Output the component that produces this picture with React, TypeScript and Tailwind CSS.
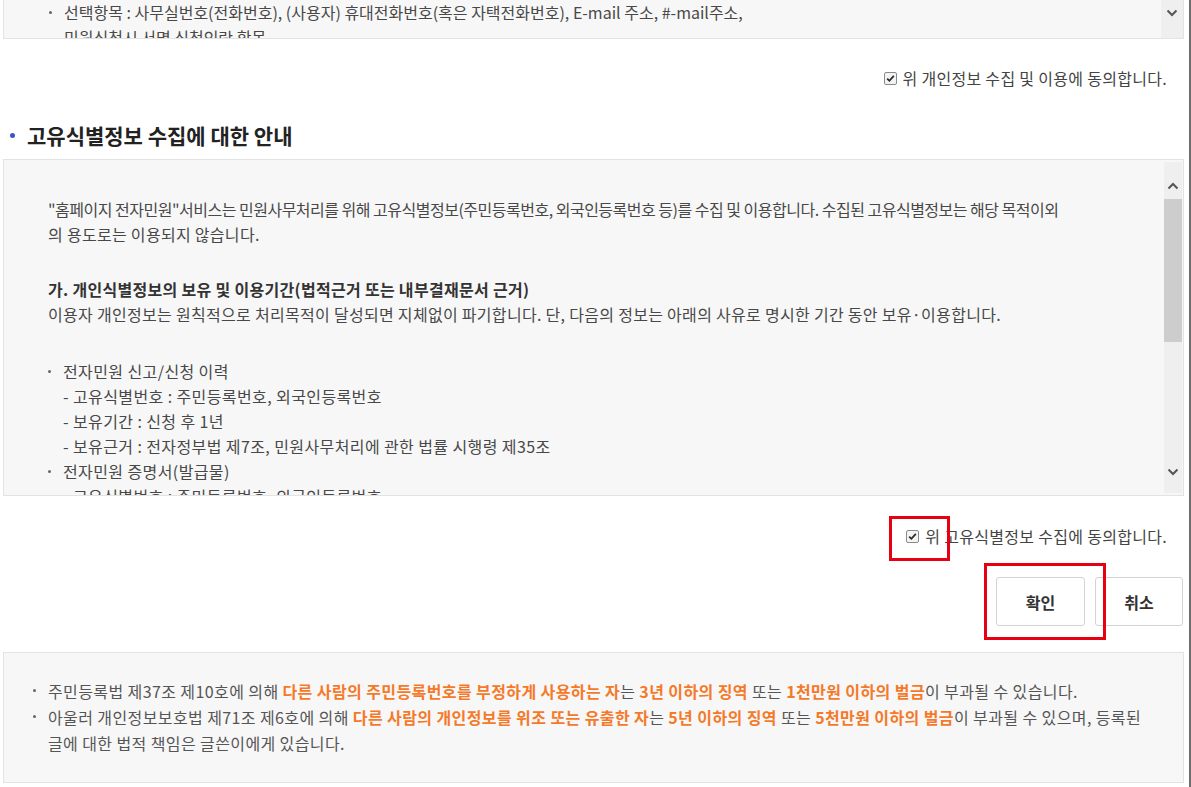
import React from "react";

function CheckIcon() {
  return (
    <svg width="13" height="13" viewBox="0 0 13 13" aria-hidden className="shrink-0">
      <rect x="0.5" y="0.5" width="12" height="12" rx="1.5" fill="#f3f3f3" stroke="#8a8a8a" />
      <path d="M3.2 6.6 L5.4 8.8 L9.8 3.9" fill="none" stroke="#2b2b2b" strokeWidth="1.8" />
    </svg>
  );
}

function Chevron({ up }: { up?: boolean }) {
  return (
    <svg width="12" height="8" viewBox="0 0 12 8" aria-hidden>
      <path
        d={up ? "M1.5 6.5 L6 2 L10.5 6.5" : "M1.5 1.5 L6 6 L10.5 1.5"}
        fill="none"
        stroke="#555"
        strokeWidth="2"
      />
    </svg>
  );
}

function Agree({ label }: { label: string }) {
  return (
    <div className="flex items-center justify-end gap-[6px] pr-[17px] text-[16px] leading-[25px] tracking-[0.3px] text-[#444]">
      <CheckIcon />
      <span>{label}</span>
    </div>
  );
}

function Dot() {
  return (
    <span className="flex h-[25px] w-[15px] shrink-0 items-center">
      <span className="h-[3px] w-[3px] rounded-full bg-[#666]" />
    </span>
  );
}

const orange = "font-bold text-[#f47a2a]";

export default function App() {
  return (
    <div className="relative h-[787px] w-[1191px] overflow-hidden border-r-2 border-[#6f6f6f] bg-white pr-[5px] pl-[3px] font-['Noto_Sans_CJK_KR','Malgun_Gothic',sans-serif] text-[16px] text-[#484848]">
      {/* top consent box, scrolled */}
      <div className="flex h-[39px] border border-t-0 border-[#e3e3e3] bg-[#f7f7f7]">
        <div className="flex-1 overflow-hidden pl-[45px] leading-[25px]">
          <div className="flex">
            <Dot />
            <span>선택항목 : 사무실번호(전화번호), (사용자) 휴대전화번호(혹은 자택전화번호), E-mail 주소, #-mail주소,</span>
          </div>
          <div className="pl-[15px]">민원신청시 서명 신청인란 항목</div>
        </div>
        <div className="flex w-[22px] justify-center bg-[#efefef] pt-[9px]">
          <Chevron />
        </div>
      </div>

      <div className="mt-[27px]">
        <Agree label="위 개인정보 수집 및 이용에 동의합니다." />
      </div>

      <h2 className="mt-[30px] flex items-center text-[21px] leading-[28px] font-bold text-[#222]">
        <span className="mr-[12px] ml-[7px] h-[5px] w-[5px] rounded-full bg-[#3b55c4]" />
        고유식별정보 수집에 대한 안내
      </h2>

      {/* scroll box */}
      <div className="mt-[10px] flex h-[337px] border border-[#e3e3e3] bg-[#f7f7f7]">
        <div className="flex-1 overflow-hidden pt-[37px] pl-[44px] leading-[25px]">
          <p className="tracking-[-0.5px]">
            "홈페이지 전자민원"서비스는 민원사무처리를 위해 고유식별정보(주민등록번호, 외국인등록번호 등)를 수집 및 이용합니다. 수집된 고유식별정보는 해당 목적이외
            <br />
            <span className="tracking-[0.3px]">의 용도로는 이용되지 않습니다.</span>
          </p>
          <p className="mt-[30px] tracking-[0.3px]">
            <b className="text-[#333]">가. 개인식별정보의 보유 및 이용기간(법적근거 또는 내부결재문서 근거)</b>
            <br />
            이용자 개인정보는 원칙적으로 처리목적이 달성되면 지체없이 파기합니다. 단, 다음의 정보는 아래의 사유로 명시한 기간 동안 보유·이용합니다.
          </p>
          <ul className="mt-[32px] tracking-[0.4px]">
            <li className="flex">
              <Dot />
              <div>
                <div>전자민원 신고/신청 이력</div>
                <div>- 고유식별번호 : 주민등록번호, 외국인등록번호</div>
                <div>- 보유기간 : 신청 후 1년</div>
                <div>- 보유근거 : 전자정부법 제7조, 민원사무처리에 관한 법률 시행령 제35조</div>
              </div>
            </li>
            <li className="flex">
              <Dot />
              <div>
                <div>전자민원 증명서(발급물)</div>
                <div>- 고유식별번호 : 주민등록번호, 외국인등록번호</div>
              </div>
            </li>
          </ul>
        </div>
        <div className="my-[2px] flex w-[18px] flex-col bg-[#efefef]">
          <div className="flex h-[37px] items-end justify-center pb-[9px]">
            <Chevron up />
          </div>
          <div className="h-[143px] bg-[#cdcdcd]" />
          <div className="flex-1" />
          <div className="flex h-[36px] items-start justify-center pt-[11px]">
            <Chevron />
          </div>
        </div>
        <div className="w-[1px]" />
      </div>

      <div className="mt-[28px]">
        <Agree label="위 고유식별정보 수집에 동의합니다." />
      </div>

      <div className="mt-[28px] flex justify-end gap-[10px] pr-[1px]">
        <button className="h-[49px] w-[89px] rounded-[3px] border border-[#d3d3d3] bg-white text-[16px] font-bold text-[#333]">
          확인
        </button>
        <button className="h-[49px] w-[88px] rounded-[3px] border border-[#d3d3d3] bg-white text-[16px] font-bold text-[#333]">
          취소
        </button>
      </div>

      {/* notice */}
      <div className="mt-[26px] h-[131px] border border-[#e3e3e3] bg-[#f7f7f7] pt-[25px] pl-[29px] leading-[26px] tracking-[0.4px] text-[#555]">
        <div className="flex">
          <Dot />
          <span>
            주민등록법 제37조 제10호에 의해 <span className={orange}>다른 사람의 주민등록번호를 부정하게 사용하는 자</span>는{" "}
            <span className={orange}>3년 이하의 징역</span> 또는 <span className={orange}>1천만원 이하의 벌금</span>이 부과될 수 있습니다.
          </span>
        </div>
        <div className="flex">
          <Dot />
          <span>
            아울러 개인정보보호법 제71조 제6호에 의해 <span className={orange}>다른 사람의 개인정보를 위조 또는 유출한 자</span>는{" "}
            <span className={orange}>5년 이하의 징역</span> 또는 <span className={orange}>5천만원 이하의 벌금</span>이 부과될 수 있으며, 등록된
            <br />
            글에 대한 법적 책임은 글쓴이에게 있습니다.
          </span>
        </div>
      </div>

      {/* red annotation boxes */}
      <div className="pointer-events-none absolute top-[516px] left-[889px] h-[45px] w-[61px] border-[3px] border-[#e60012]" />
      <div className="pointer-events-none absolute top-[563px] left-[984px] h-[77px] w-[122px] border-[3px] border-[#e60012]" />
    </div>
  );
}
